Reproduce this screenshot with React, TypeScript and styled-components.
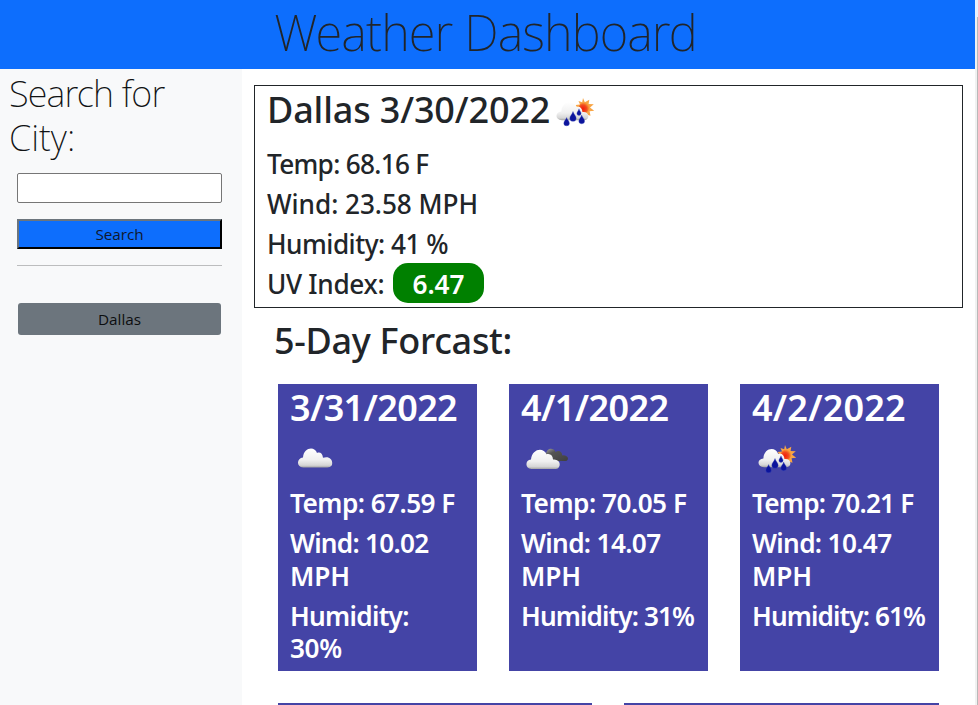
import React from 'react';
import styled, { createGlobalStyle } from 'styled-components';

const GlobalStyle = createGlobalStyle`
  *, *::before, *::after { box-sizing: border-box; }
  html, body { margin: 0; height: 100%; overflow: hidden; background: #fff; }
  body { font-family: "Noto Sans", "Open Sans", sans-serif; color: #212529; }
  h1, h2, h3, p { margin: 0; font-weight: 500; }
`;

const Viewport = styled.div`
  display: grid;
  grid-template-columns: 975px 3px;
  height: 705px;
  overflow: hidden;
`;

const Page = styled.div`
  min-width: 0;
`;

const ScrollTrack = styled.div`
  background: #f1f1f1;
  border-top: 17px solid #e9f1fd;
`;

const ScrollThumb = styled.div`
  width: 1px;
  height: 100%;
  margin-left: 2px;
  background: #b9b9b9;
`;

const Tracked = styled.span<{ $track?: number }>`
  letter-spacing: ${(p) => p.$track ?? 0}px;
  white-space: nowrap;
`;

const Header = styled.header`
  height: 69px;
  background: #0d6efd;
  text-align: center;
`;

const Title = styled.h1`
  && { font-weight: 200; }
  font-size: 49px;
  line-height: 65px;
  padding-right: 4px;
`;

const Columns = styled.div`
  display: grid;
  grid-template-columns: 242px 733px;
  height: 1000px;
`;

const Sidebar = styled.aside`
  background: #f8f9fa;
  padding: 3px 20px 0 17px;
`;

const SearchHeading = styled.h2`
  && { font-weight: 200; }
  color: #101214;
  font-size: 36px;
  line-height: 44px;
  margin-left: -8px;
`;

const CityInput = styled.input`
  display: block;
  width: 205px;
  height: 30px;
  margin-top: 13px;
  padding: 0 4px;
  border: 1px solid #767676;
  border-radius: 2px;
  background: #fff;
`;

const SearchButton = styled.button`
  display: block;
  width: 205px;
  height: 30px;
  margin-top: 16px;
  padding: 0;
  border: 2px outset #0b0f19;
  border-color: #6c757d #10182c #10182c #6c757d;
  background: #0d6efd;
  color: #10182c;
  font: 400 15.3px/26px "Open Sans", sans-serif;
`;

const Divider = styled.hr`
  width: 205px;
  height: 1px;
  margin: 16px 0 37px;
  border: 0;
  background: #bcbdbe;
`;

const HistoryButton = styled.button`
  display: block;
  width: 203px;
  height: 32px;
  margin-left: 1px;
  padding: 0;
  border: 0;
  border-radius: 3px;
  background: #6c757d;
  color: #0c0e10;
  font: 400 15.3px/33px "Open Sans", sans-serif;
`;

const Main = styled.main`
  padding: 16px 12px 0;
`;

const Current = styled.section`
  width: 709px;
  height: 223px;
  padding: 2px 12px 0;
  border: 1px solid #212529;
`;

const CurrentTitle = styled.h1`
  display: flex;
  height: 59.6px;
  font-size: 36px;
  line-height: 44px;

  svg { flex: none; margin: -2px 0 0 0; }
`;

const Stat = styled.p`
  font-size: 26.2px;
  line-height: 32.3px;
  padding-bottom: 8px;
`;

const UvRow = styled(Stat)`
  display: flex;
  line-height: 32px;
`;

const UvLabel = styled.span`
  width: 126px;
  letter-spacing: -0.3px;
`;

const UvBadge = styled.span`
  height: 40px;
  width: 91px;
  margin-top: -5.5px;
  border-radius: 15px;
  background: #008000;
  color: #fff;
  font-weight: 600;
  line-height: 43px;
  text-align: center;
`;

const ForecastTitle = styled.h2`
  margin: 11px 0 21px 20px;
  font-size: 36px;
  line-height: 44px;
`;

const Cards = styled.div<{ $columns: string }>`
  display: grid;
  grid-template-columns: ${(p) => p.$columns};
  column-gap: 32px;
  width: 661px;
  margin: 0 0 32px 24px;
`;

const Card = styled.article`
  height: 287px;
  padding: 2px 12px 0;
  background: #4444a6;
  color: #fff;

  && p, && h3 { font-weight: 600; }
`;

const CardDate = styled.h3`
  height: 101px;
  font-size: 36px;
  line-height: 44px;

  svg { display: block; margin-top: 3px; }
`;

function Gradients() {
  return (
    <defs>
      <linearGradient id="cloud" x1="0" y1="0" x2="0" y2="1">
        <stop offset="0" stopColor="#ffffff" />
        <stop offset="0.6" stopColor="#f0f0f0" />
        <stop offset="0.88" stopColor="#d6d6d6" />
        <stop offset="1" stopColor="#a4a4a4" />
      </linearGradient>
      <linearGradient id="darkCloud" x1="0" y1="0" x2="1" y2="1">
        <stop offset="0" stopColor="#a0a0a0" />
        <stop offset="0.3" stopColor="#555555" />
        <stop offset="1" stopColor="#3f3f3f" />
      </linearGradient>
      <radialGradient id="sun" cx="0.4" cy="0.6" r="0.6">
        <stop offset="0" stopColor="#f41d08" />
        <stop offset="0.6" stopColor="#f04a20" />
        <stop offset="1" stopColor="#fa9b35" />
      </radialGradient>
    </defs>
  );
}

function CloudIcon() {
  return (
    <svg width="50" height="50" viewBox="0 0 50 50">
      <Gradients />
      <path fill="url(#cloud)" d="M13.2 34.5C5.8 34.2 6.8 25 13 24.6C13.6 14.2 24.8 12.8 27 20C29.7 18.6 32.6 20.2 33 24.8C38.5 23 42.2 25.8 42.2 30C42.2 33.5 40 34.5 36 34.5Z" />
    </svg>
  );
}

function BrokenCloudsIcon() {
  return (
    <svg width="50" height="50" viewBox="0 0 50 50">
      <Gradients />
      <path fill="url(#darkCloud)" d="M25 24C24 14.5 32.5 14 34.5 19C38 16.8 41.2 19 41.2 22.4C48 21.8 48.5 28 44.5 28H31Z" />
      <path fill="url(#cloud)" d="M10.5 36C3.7 35.5 4 26.8 10 26.4C11 15.5 22.5 13.6 25.5 21.3C29.5 20.3 31.8 22.5 32 26.5C40.3 25.5 40.5 35.3 35 36Z" />
    </svg>
  );
}

function RainIcon() {
  return (
    <svg width="50" height="50" viewBox="0 0 50 50">
      <Gradients />
      <g transform="translate(0 1.5)">
        <path fill="#f8a545" d="M33 10.5L34.8 14.8L39.3 12.2L38.6 16.4L43.8 16.8L40 20L44.2 23.2L39.6 23.7L40.5 28.3L36.5 27L33.5 30L31 27L26.3 26L28.5 22L25.6 17.5L30 17L28.5 13.5L32.2 14.8Z" />
        <circle cx="34" cy="20.3" r="5.2" fill="url(#sun)" />
      </g>
      <path fill="url(#cloud)" d="M12 34.2C4.7 33.8 4.8 26 11.4 25.4C12 14.8 23.5 13.2 26.2 21C29.7 19.8 32.2 22 32.4 26C40 25.2 40 33.8 34.5 34.2Z" />
      <g fill="#0c149c" stroke="#4150bf" strokeWidth="0.35">
        <path d="M16.6 31.5C17.1 33.6 19.4 35.1 19.4 37.2A2.8 2.6 0 0 1 13.8 37.2C13.8 35.1 16.1 33.6 16.6 31.5Z" />
        <path d="M23 25.5C23.6 28.2 26.2 29.9 26.2 32.2A3.2 3.1 0 0 1 19.8 32.2C19.8 29.9 22.4 28.2 23 25.5Z" />
        <path d="M29 22.8C29.3 24.5 31.1 26 31.1 27.4A2.1 2 0 0 1 26.9 27.4C26.9 26 28.7 24.5 29 22.8Z" />
        <path d="M31.7 29C32.1 31.2 34.6 32.8 34.6 35A2.9 2.8 0 0 1 28.8 35C28.8 32.8 31.3 31.2 31.7 29Z" />
      </g>
    </svg>
  );
}

type Line = [string, number];

interface Day {
  date: Line;
  Icon: () => React.JSX.Element;
  stats: Line[][];
}

const days: Day[] = [
  {
    date: ['3/31/2022', -0.65],
    Icon: CloudIcon,
    stats: [[['Temp: 67.59 F', -0.55]], [['Wind: 10.02', -0.75], ['MPH', -0.1]], [['Humidity:', -0.7], ['30%', -0.4]]],
  },
  {
    date: ['4/1/2022', -0.6],
    Icon: BrokenCloudsIcon,
    stats: [[['Temp: 70.05 F', -0.5]], [['Wind: 14.07', -0.65], ['MPH', -0.1]], [['Humidity: 31%', -0.9]]],
  },
  {
    date: ['4/2/2022', 0.2],
    Icon: RainIcon,
    stats: [[['Temp: 70.21 F', -0.8]], [['Wind: 10.47', -0.65], ['MPH', -0.1]], [['Humidity: 61%', -0.9]]],
  },
];

function Lines({ lines }: { lines: Line[] }) {
  return (
    <>
      {lines.map(([text, track], i) => (
        <React.Fragment key={text}>
          {i > 0 && <br />}
          <Tracked $track={track}>{text}</Tracked>
        </React.Fragment>
      ))}
    </>
  );
}

export default function App() {
  return (
    <Viewport>
      <GlobalStyle />
      <Page>
        <Header>
          <Title><Tracked $track={-0.9}>Weather Dashboard</Tracked></Title>
        </Header>
        <Columns>
          <Sidebar>
            <SearchHeading>
              <Lines lines={[['Search for', -0.8], ['City:', 0]]} />
            </SearchHeading>
            <CityInput aria-label="City" />
            <SearchButton><Tracked $track={-0.1}>Search</Tracked></SearchButton>
            <Divider />
            <HistoryButton>Dallas</HistoryButton>
          </Sidebar>
          <Main>
            <Current>
              <CurrentTitle>
                <Tracked $track={-0.15}>Dallas 3/30/2022</Tracked>
                <RainIcon />
              </CurrentTitle>
              <Stat><Tracked $track={-0.7}>Temp: 68.16 F</Tracked></Stat>
              <Stat><Tracked $track={-0.05}>Wind: 23.58 MPH</Tracked></Stat>
              <Stat><Tracked $track={-0.5}>Humidity: 41 %</Tracked></Stat>
              <UvRow>
                <UvLabel>UV Index:</UvLabel>
                <UvBadge>6.47</UvBadge>
              </UvRow>
            </Current>
            <ForecastTitle><Tracked $track={-0.3}>5-Day Forcast:</Tracked></ForecastTitle>
            <Cards $columns="repeat(3, minmax(0, 1fr))">
              {days.map(({ date, Icon, stats }) => (
                <Card key={date[0]}>
                  <CardDate>
                    <Lines lines={[date]} />
                    <Icon />
                  </CardDate>
                  {stats.map((lines) => (
                    <Stat key={lines[0][0]}><Lines lines={lines} /></Stat>
                  ))}
                </Card>
              ))}
            </Cards>
            <Cards $columns="314px 315px">
              <Card />
              <Card />
            </Cards>
          </Main>
        </Columns>
      </Page>
      <ScrollTrack><ScrollThumb /></ScrollTrack>
    </Viewport>
  );
}
